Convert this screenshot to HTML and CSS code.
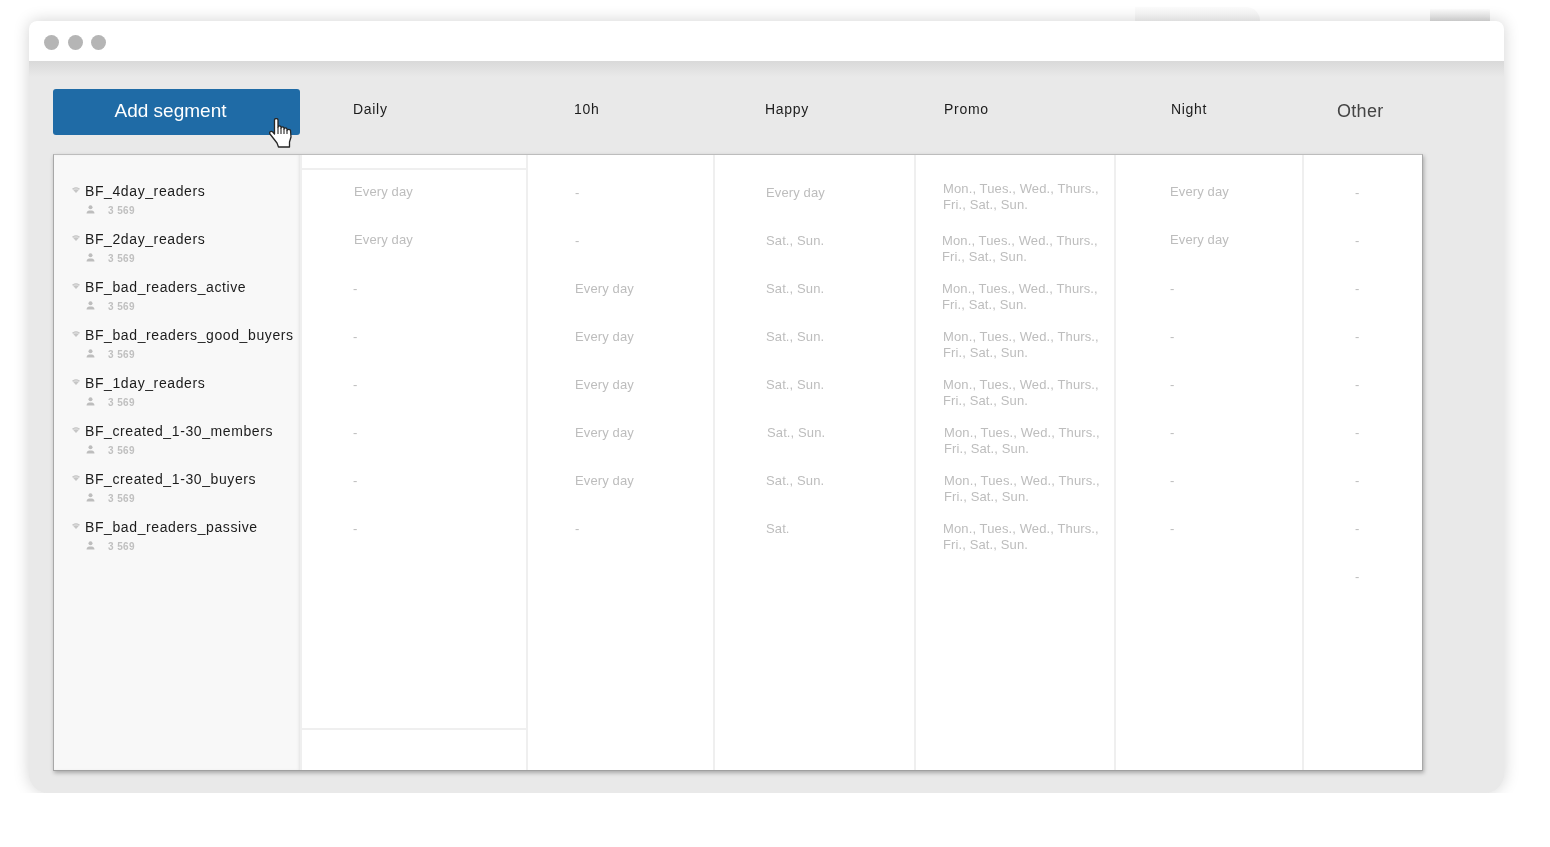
FILE: index.html
```html
<!DOCTYPE html>
<html lang="en">
  <head>
    <meta charset="UTF-8" />
    <meta name="viewport" content="width=device-width, initial-scale=1.0" />
    <title>Segments</title>
    <link rel="stylesheet" href="styles.css">
  </head>

  <body>
    <div class="stage">
      <div class="ghost ghost-wide"></div>
      <div class="ghost ghost-small"></div>

      <div class="window">
        <div class="titlebar">
          <span class="dot"></span>
          <span class="dot"></span>
          <span class="dot"></span>
        </div>

        <div class="panel">
          <div class="head">
            <button class="add-btn">Add segment</button>
            <div class="head-col h-daily">Daily</div>
            <div class="head-col h-10h">10h</div>
            <div class="head-col h-happy">Happy</div>
            <div class="head-col h-promo">Promo</div>
            <div class="head-col h-night">Night</div>
            <div class="head-col head-other">Other</div>
          </div>

          <div class="table">
            <ul class="segments" id="segments"></ul>
            <div class="col col-daily" id="daily"></div>
            <div class="col col-10h" id="h10"></div>
            <div class="col col-happy" id="happy"></div>
            <div class="col col-promo" id="promo"></div>
            <div class="col col-night" id="night"></div>
            <div class="col col-other" id="other"></div>
          </div>
        </div>

        <!-- hand cursor sits over the button -->
        <svg class="cursor" width="24" height="30" viewBox="0 0 24 30">
          <path d="M5.500 2c0-2 3.500-2 3.500 0v7c0-1.500 3-1.500 3 0v1c0-1.500 3-1.500 3 0v1c0-1.500 3-1.500 3 0v1.500c0-1.500 3.500-1.500 3.500 0L22 19l-1.500 5v5h-11L8 25l-7-9c-1.200-1.800 1-3.500 2.800-2l1.700 2z" fill="#fff" stroke="#262626" stroke-width="1.300" stroke-linejoin="round"/>
          <path d="M9 9v7M12 10v6M15 11v5M18 12.500V16" fill="none" stroke="#262626" stroke-width="1.100"/>
        </svg>
      </div>
    </div>

    <script src="app.js"></script>
  </body>
</html>
```

FILE: styles.css
```css
* {
  box-sizing: border-box;
  margin: 0;
  padding: 0;
}

:root {
  --panel-bg: #e9e9e9;
  --line: #efefef;
  --muted: #bdbdbd;
}

body {
  background: #fff;
  font-family: "Liberation Sans", Arial, sans-serif;
  overflow: hidden;
}

/* white below the window: the shadow is cut off at the bottom edge */
.stage {
  position: relative;
  height: 793px;
  overflow: hidden;
  padding: 21px 46px 0 29px;
}

/* faint leftovers peeking out above the window */
.ghost {
  position: absolute;
}

.ghost-wide {
  left: 1135px;
  top: 7px;
  width: 125px;
  height: 14px;
  border-top-right-radius: 40px;
  background: linear-gradient(#fbfbfb, #f4f4f4);
}

.ghost-small {
  left: 1430px;
  top: 9px;
  width: 60px;
  height: 12px;
  background: linear-gradient(#fcfcfc, #dcdcdc);
}

.window {
  position: relative;
  width: 1475px;
  height: 772px;
  border-radius: 8px 8px 20px 20px;
  box-shadow: 0 0 16px rgba(0, 0, 0, 0.18);
  background: var(--panel-bg);
}

.titlebar {
  display: flex;
  align-items: center;
  gap: 9px;
  height: 40px;
  padding: 2px 0 0 15px;
  background: #fff;
  border-radius: 8px 8px 0 0;
}

.dot {
  width: 15px;
  height: 15px;
  border-radius: 50%;
  background: #b5b5b5;
}

.dot:last-child {
  margin-left: -1px;
}

.panel {
  height: 732px;
  padding: 28px 0 0 24px;
  border-radius: 0 0 20px 20px;
  background: linear-gradient(#d9d9d9, var(--panel-bg) 16px);
}

.head {
  display: flex;
  height: 65px;
  filter: blur(0.3px);
}

.add-btn {
  flex: none;
  width: 247px;
  height: 46px;
  padding: 0 12px 2px 0;
  border: 0;
  border-radius: 3px;
  background: #1f6ba6;
  color: #fff;
  font-family: inherit;
  font-size: 19px;
}

.head-col {
  padding-top: 12px;
  font-size: 14px;
  letter-spacing: 0.7px;
  color: #1c1c1c;
}

.head-other {
  padding-left: 33px;
  width: 118px;
  font-size: 18px;
  letter-spacing: 0.3px;
  color: #444;
}

.h-daily { width: 228px; padding-left: 53px; }
.h-10h { width: 187px; padding-left: 46px; }
.h-happy { width: 201px; padding-left: 50px; }
.h-promo { width: 200px; padding-left: 28px; }
.h-night { width: 188px; padding-left: 55px; }

.table {
  display: flex;
  width: 1370px;
  height: 617px;
  background: #fff;
  border-top: 1px solid #bdbdbd;
  border-left: 1px solid #a8a8a8;
  border-right: 1px solid #a8a8a8;
  border-bottom: 1px solid #a0a0a0;
  box-shadow: 1px 2px 4px rgba(0, 0, 0, 0.28);
}

.segments {
  flex: none;
  width: 246px;
  padding-top: 21px;
  list-style: none;
  background: #f8f8f8;
  box-shadow: inset -2px 0 3px -1px #e2e2e2;
  filter: blur(0.3px);
}

.segment {
  height: 48px;
  padding-left: 18px;
}

.seg-name {
  display: flex;
  align-items: center;
  gap: 5px;
  height: 30px;
  font-size: 14px;
  letter-spacing: 0.6px;
  color: #1c1c1c;
}

.seg-name svg {
  margin-top: -2px;
}

.seg-count {
  display: flex;
  align-items: center;
  gap: 13px;
  margin-top: -1px;
  padding-left: 14px;
  font-size: 10px;
  font-weight: bold;
  letter-spacing: 0.4px;
  color: #c0c0c0;
}

.seg-count svg {
  margin-top: -3px;
}

.col {
  flex: none;
  border-right: 2px solid var(--line);
  padding-top: 21px;
}

.cell {
  display: flex;
  align-items: center;
  height: 48px;
  padding-bottom: 14px;
  font-size: 13px;
  letter-spacing: 0.12px;
  line-height: 16px;
  color: var(--muted);
  filter: blur(0.3px);
}

.col-daily {
  position: relative;
  width: 228px;
  padding-top: 20px;
  padding-left: 52px;
  border-left: 2px solid var(--line);
}

.col-10h { width: 187px; padding-left: 47px; }
.col-happy { width: 201px; padding-left: 51px; }
.col-night { width: 188px; padding-top: 20px; padding-left: 54px; }
.col-other { width: 118px; padding-left: 51px; border-right: 0; }

.col-promo {
  width: 200px;
  padding-left: 27px;
}

/* dashes under the "Every day" rows sit a pixel lower */
.col-daily .cell-dash,
.col-night .cell-dash {
  margin-top: 2px;
}

.col-daily .cell-dash {
  margin-left: -1px;
}

/* two-line cells: first line stays on the row's text line */
.col-promo .cell {
  align-items: flex-start;
  padding: 9px 0 0;
}

.col-promo .cell:first-child span {
  margin-top: -4px;
}

.cell-wrap {
  width: 165px;
}

/* the two inner rules only the daily column has */
.col-daily::before,
.col-daily::after {
  content: "";
  position: absolute;
  left: 0;
  right: 0;
  height: 2px;
  background: var(--line);
}

.col-daily::before { top: 13px; }
.col-daily::after { top: 573px; }

.cursor {
  position: absolute;
  left: 240px;
  top: 97px;
}
```

FILE: app.js
```js
// table data, one array per column
var names = [
  "BF_4day_readers",
  "BF_2day_readers",
  "BF_bad_readers_active",
  "BF_bad_readers_good_buyers",
  "BF_1day_readers",
  "BF_created_1-30_members",
  "BF_created_1-30_buyers",
  "BF_bad_readers_passive"
];

var E = "Every day";
var S = "Sat., Sun.";
var W = "Mon., Tues., Wed., Thurs., Fri., Sat., Sun.";

var columns = {
  daily: [E, E, "-", "-", "-", "-", "-", "-"],
  h10: ["-", "-", E, E, E, E, E, "-"],
  happy: [E, S, S, S, S, S, S, "Sat."],
  promo: [W, W, W, W, W, W, W, W],
  night: [E, E, "-", "-", "-", "-", "-", "-"],
  other: ["-", "-", "-", "-", "-", "-", "-", "-", "-"]
};

// the rows don't line up exactly in these two columns
var nudges = {
  happy: [0, 0, 0, 0, 0, 1, 0, 0],
  promo: [0, -1, -1, 0, 0, 1, 1, 0]
};

var wifi =
  '<svg width="8" height="6" viewBox="0 0 8 6"><path d="M0 1.800C2.200-.4 5.800-.4 8 1.800L4 6z" fill="#c6c6c6"/><path d="M1.200 3C2.800 1.600 5.200 1.600 6.800 3" fill="none" stroke="#f8f8f8" stroke-width=".6"/></svg>';
var user =
  '<svg width="9" height="9" viewBox="0 0 9 9"><circle cx="4.500" cy="2.300" r="2" fill="#bdbdbd"/><path d="M.5 8.500c0-2.500 2-3 4-3s4 .5 4 3z" fill="#bdbdbd"/></svg>';

function cellClass(t) {
  if (t === W) return "cell-wrap";
  if (t === "-") return "cell-dash";
  return "";
}

document.getElementById("segments").innerHTML = names
  .map(function (n) {
    return (
      '<li class="segment"><div class="seg-name">' + wifi + "<span>" + n +
      '</span></div><div class="seg-count">' + user + "<span>3 569</span></div></li>"
    );
  })
  .join("");

Object.keys(columns).forEach(function (id) {
  document.getElementById(id).innerHTML = columns[id]
    .map(function (t, i) {
      var nudge = nudges[id] ? nudges[id][i] : 0;
      var style = nudge ? ' style="margin-left:' + nudge + 'px"' : "";
      return '<div class="cell"><span class="' + cellClass(t) + '"' + style + ">" + t + "</span></div>";
    })
    .join("");
});
```
